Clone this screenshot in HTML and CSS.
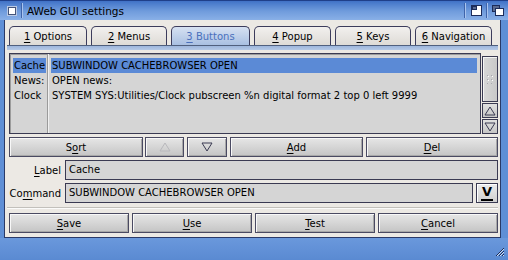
FILE: index.html
```html
<!DOCTYPE html>
<html>
<head>
<meta charset="utf-8">
<title>AWeb GUI settings</title>
<link rel="stylesheet" href="styles.css">
</head>
<body>
<div class="window">
  <div class="titlebar">
    <div class="gadget close"><span class="closebox"></span></div>
    <div class="tsep"></div>
    <div class="title">AWeb GUI settings</div>
    <div class="tsep"></div>
    <div class="gadget">
      <svg width="11" height="11" viewBox="0 0 11 11"><rect x="0.5" y="0.5" width="10" height="10" fill="#fff" stroke="#1c2c5a"/><rect x="1" y="1" width="5" height="4" fill="#5a6a90"/><rect x="1.5" y="1.5" width="4" height="3" fill="none" stroke="#1c2c5a"/></svg>
    </div>
    <div class="tsep"></div>
    <div class="gadget">
      <svg width="12" height="11" viewBox="0 0 12 11"><rect x="0.5" y="0.5" width="7" height="6" fill="#5a6a90" stroke="#1c2c5a"/><rect x="3.5" y="3.5" width="8" height="7" fill="#fff" stroke="#1c2c5a"/></svg>
    </div>
  </div>

  <div class="frame">
    <div class="panel">
      <div class="tabs">
        <div class="tab t1"><span><span class="ul">1</span> Options</span></div>
        <div class="tab t2"><span><span class="ul">2</span> Menus</span></div>
        <div class="tab t3 active"><span><span class="ul">3</span> Buttons</span></div>
        <div class="tab t4"><span><span class="ul">4</span> Popup</span></div>
        <div class="tab t5"><span><span class="ul">5</span> Keys</span></div>
        <div class="tab t6"><span><span class="ul">6</span> Navigation</span></div>
      </div>
      <div class="tabbar"></div>

      <div class="listarea">
        <div class="list">
          <div class="col labels">
            <div class="row sel">Cache</div>
            <div class="row">News:</div>
            <div class="row">Clock</div>
          </div>
          <div class="col values">
            <div class="row sel">SUBWINDOW CACHEBROWSER OPEN</div>
            <div class="row">OPEN news:</div>
            <div class="row">SYSTEM SYS:Utilities/Clock pubscreen %n digital format 2 top 0 left 9999</div>
          </div>
        </div>
        <div class="scroll">
          <div class="knob">
            <svg width="6" height="9" viewBox="0 0 6 9"><g fill="#a8a8b0"><rect x="0" y="0" width="1" height="1"/><rect x="4" y="0" width="1" height="1"/><rect x="0" y="4" width="1" height="1"/><rect x="4" y="4" width="1" height="1"/><rect x="0" y="8" width="1" height="1"/><rect x="4" y="8" width="1" height="1"/></g><g fill="#fff"><rect x="1" y="1" width="1" height="1"/><rect x="5" y="1" width="1" height="1"/><rect x="1" y="5" width="1" height="1"/><rect x="5" y="5" width="1" height="1"/></g></svg>
          </div>
          <div class="arrow">
            <svg width="12" height="10" viewBox="0 0 12 10"><path d="M6 1 L11 9 L1 9 Z" fill="none" stroke="#3a3a52" stroke-width="1"/></svg>
          </div>
          <div class="arrow">
            <svg width="12" height="10" viewBox="0 0 12 10"><path d="M1 1 L11 1 L6 9 Z" fill="none" stroke="#3a3a52" stroke-width="1"/></svg>
          </div>
        </div>
      </div>

      <div class="btnrow">
        <div class="btn"><span>S<span class="ul">o</span>rt</span></div>
        <div class="btn disabled">
          <svg width="12" height="10" viewBox="0 0 12 10"><path d="M6 1 L11 9 L1 9 Z" fill="none" stroke="#b8b8bc" stroke-width="1"/></svg>
        </div>
        <div class="btn">
          <svg width="12" height="10" viewBox="0 0 12 10"><path d="M1 1 L11 1 L6 9 Z" fill="none" stroke="#3a3a52" stroke-width="1"/></svg>
        </div>
        <div class="btn"><span><span class="ul">A</span>dd</span></div>
        <div class="btn"><span><span class="ul">D</span>el</span></div>
      </div>

      <div class="field-row">
        <div class="flabel"><span class="ul">L</span>abel</div>
        <div class="field">Cache</div>
      </div>
      <div class="field-row">
        <div class="flabel">Co<span class="ul">m</span>mand</div>
        <div class="field">SUBWINDOW CACHEBROWSER OPEN</div>
        <div class="popbtn"><span class="vglyph">V</span></div>
      </div>

      <div class="hsep"></div>

      <div class="actions">
        <div class="btn"><span><span class="ul">S</span>ave</span></div>
        <div class="btn"><span><span class="ul">U</span>se</span></div>
        <div class="btn"><span><span class="ul">T</span>est</span></div>
        <div class="btn"><span><span class="ul">C</span>ancel</span></div>
      </div>
    </div>
    <div class="bottom">
      <svg class="resize" width="10" height="10" viewBox="0 0 10 10"><path d="M9 1 L1 9 M9 4 L4 9 M9 7 L7 9" stroke="#1c2c5a" stroke-width="1"/><path d="M9 2 L2 9 M9 5 L5 9 M9 8 L8 9" stroke="#cfe0f6" stroke-width="1"/></svg>
    </div>
  </div>
</div>
</body>
</html>
```

FILE: styles.css
```css
* { box-sizing: border-box; }
html, body { margin: 0; padding: 0; }
body {
  width: 508px;
  height: 260px;
  overflow: hidden;
  font-family: "DejaVu Sans", "Liberation Sans", sans-serif;
  font-size: 10px;
  color: #000;
  background: #5e8dd4;
}
.ul { text-decoration: underline; text-underline-offset: 2px; }

.window {
  width: 508px;
  height: 260px;
  display: flex;
  flex-direction: column;
  background: #5f8fd6;
}

.titlebar {
  height: 20px;
  display: flex;
  align-items: center;
  background: linear-gradient(#3f70c6 0px, #4a7bcc 2px, #6f9bdc 10px, #8cb2e8 20px);
  border-top: 1px solid #1f3f8a;
  padding: 0 4px 0 6px;
}
.gadget {
  height: 14px;
  display: flex;
  align-items: center;
  justify-content: center;
}
.close { width: 10px; margin-left: 1px; }
.closebox {
  display: block;
  width: 8px;
  height: 8px;
  background: #fff;
  border: 1px solid #44547a;
  box-shadow: 0 0 0 1px #b8c8e4;
}
.tsep {
  width: 2px;
  height: 15px;
  border-left: 1px solid #3f64aa;
  border-right: 1px solid #a9c4ee;
  margin: 0 4px;
}
.titlebar .tsep:nth-of-type(1) { margin: 0 9px 0 5px; }
.title {
  flex: 1;
  color: #000;
  font-size: 10.5px;
  padding-top: 1px;
}
.titlebar .gadget:not(.close) { width: 12px; }

.frame {
  flex: 1;
  display: flex;
  flex-direction: column;
}
.panel {
  margin-left: 4px;
  width: 497px;
  height: 218px;
  background: #ece9e4;
  border: 1px solid #2a3a68;
  border-top: none;
  padding: 6px 2px 0 4px;
  display: flex;
  flex-direction: column;
}

.tabs {
  display: flex;
  gap: 4px;
  height: 19px;
}
.tab {
  height: 19px;
  border: 1px solid #3c3c5c;
  border-bottom: none;
  border-radius: 5px 5px 0 0;
  background: linear-gradient(#f2f0ee, #dedbd6);
  display: flex;
  align-items: center;
  justify-content: center;
  padding-top: 1px;
  white-space: nowrap;
}
.t1 { width: 78px; }
.t2 { width: 76px; }
.t3 { width: 79px; }
.t4 { width: 77px; }
.t5 { width: 76px; }
.t6 { width: 77px; }
.tab.active {
  background: linear-gradient(#d6e1f2, #a9c0e2);
  color: #4a70bc;
}
.tabbar {
  height: 5px;
  margin-left: -2px;
  background: linear-gradient(#9db6dc, #b5c9e6);
  border-top: 1px solid #50607e;
}

.listarea {
  margin-top: 3px;
  height: 81px;
  display: flex;
  gap: 1px;
}
.list {
  width: 473px;
  border: 1px solid #3a3a52;
  background: #d5d5d5;
  display: flex;
  padding: 0 3px;
  box-shadow: inset 1px 1px 0 #9c9c9c;
}
.col { padding-top: 4px; }
.labels {
  width: 35px;
  border-right: 1px solid #9a9a9a;
}
.values {
  flex: 1;
  padding-left: 2px;
  border-left: 1px solid #f0f0f0;
}
.row {
  height: 15px;
  line-height: 15px;
  white-space: nowrap;
  padding-left: 1px;
}
.labels .row { margin-right: 1px; }
.row.sel { background: #5b8ad6; color: #000; }

.scroll {
  width: 16px;
  display: flex;
  flex-direction: column;
  gap: 1px;
  padding-top: 3px;
}
.knob {
  height: 46px;
  border: 1px solid #3a3a52;
  background: linear-gradient(90deg, #d8d8d8, #c8c8c8);
  box-shadow: inset 1px 1px 0 #f4f4f4;
  display: flex;
  align-items: center;
  justify-content: center;
}
.arrow {
  height: 15px;
  border: 1px solid #3a3a52;
  background: linear-gradient(#e0e0e0, #c6c6c6);
  display: flex;
  align-items: center;
  justify-content: center;
}

.btn {
  height: 20px;
  border: 1px solid #4a4a62;
  background: linear-gradient(#e6e6e6, #d2d2d2 60%, #c4c4c4);
  box-shadow: inset 1px 1px 0 #f8f8f8, inset -1px -1px 0 #a8a8a8;
  display: flex;
  align-items: center;
  justify-content: center;
  white-space: nowrap;
}
.btnrow {
  margin-top: 3px;
  display: grid;
  grid-template-columns: 134px 38px 40px 133px 1fr;
  gap: 3px;
}
.btnrow .btn:nth-child(2) { margin-left: -1px; }

.field-row {
  margin-top: 3px;
  height: 20px;
  display: flex;
  align-items: center;
  gap: 3px;
}
.flabel {
  width: 53px;
  text-align: right;
  padding-right: 1px;
  white-space: nowrap;
}
.field {
  flex: 1;
  height: 20px;
  line-height: 18px;
  border: 1px solid #3a3a52;
  background: #d5d5d5;
  padding-left: 3px;
  white-space: nowrap;
}
.popbtn {
  width: 22px;
  height: 20px;
  border: 1px solid #3a3a52;
  background: linear-gradient(#ececec, #cfcfcf);
  box-shadow: inset 1px 1px 0 #fff;
  display: flex;
  align-items: flex-start;
  justify-content: center;
}
.vglyph {
  font-weight: bold;
  font-size: 13px;
  line-height: 14px;
  border-bottom: 2px solid #000;
  padding: 0 1px;
  margin-top: 1px;
}

.hsep {
  margin: 4px 0 0 -2px;
  height: 2px;
  border-top: 1px solid #c2c0bb;
  border-bottom: 1px solid #fbfbfa;
}

.actions {
  margin-top: 4px;
  display: grid;
  grid-template-columns: repeat(4, 1fr);
  gap: 3px;
}

.bottom {
  flex: 1;
  background: linear-gradient(#6a98dc, #5a8ad2);
  display: flex;
  justify-content: flex-end;
  align-items: flex-end;
  padding: 0 3px 3px 0;
}
.resize { display: block; }
```
